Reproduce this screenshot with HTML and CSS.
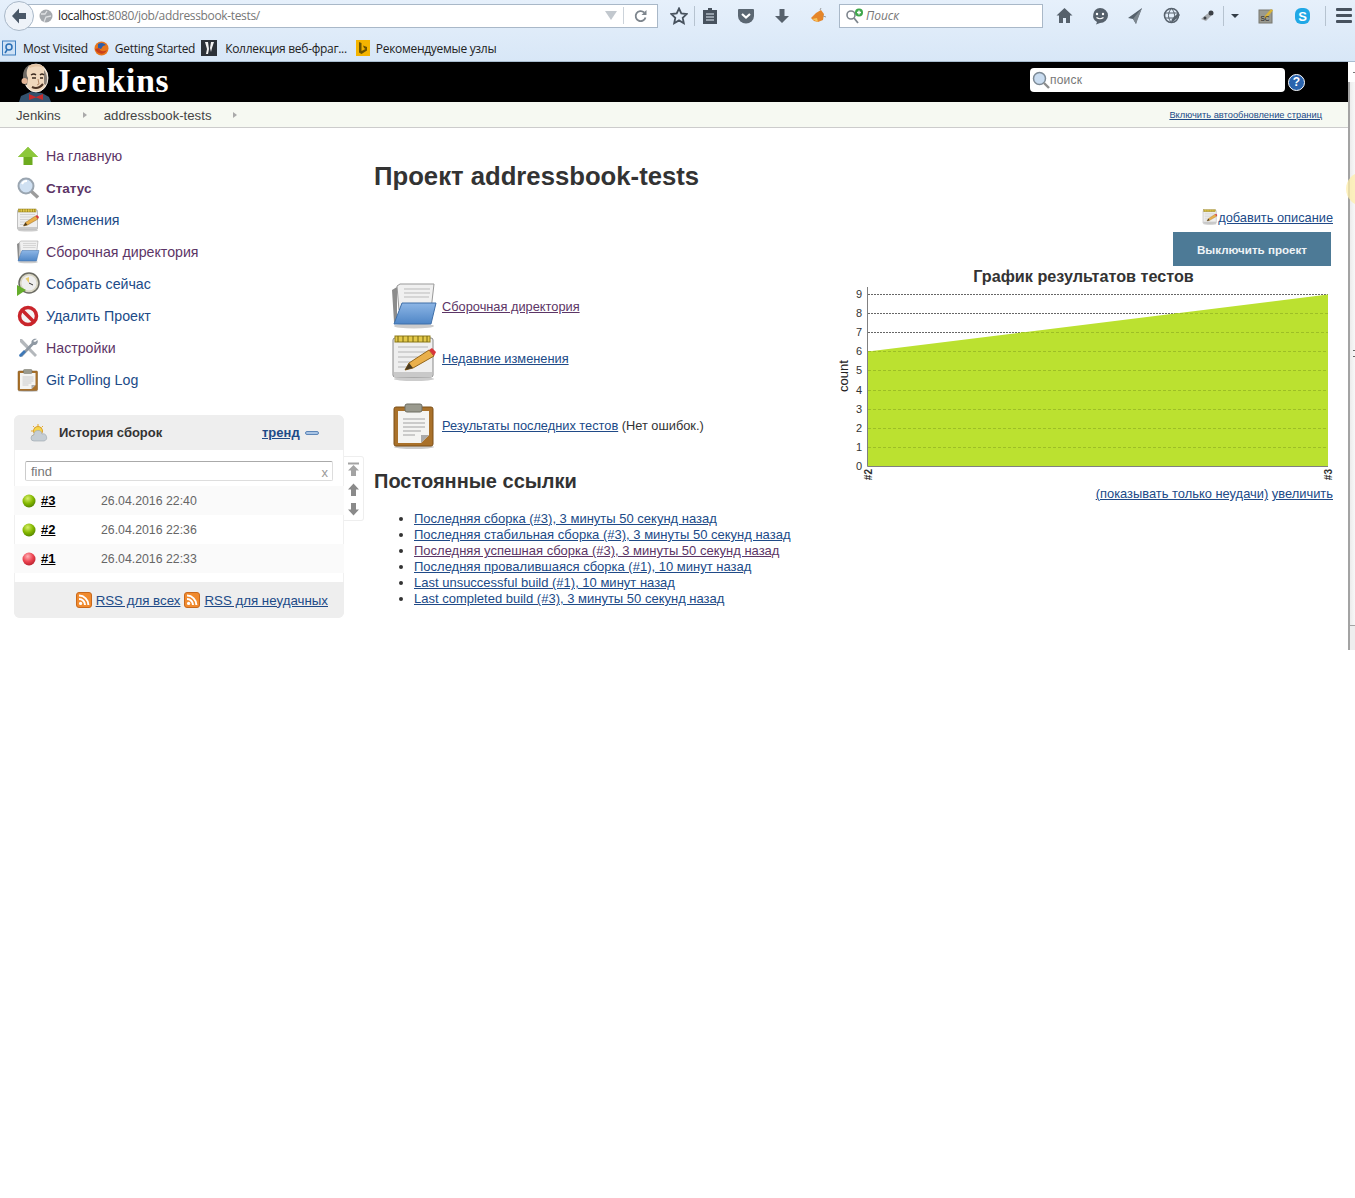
FILE: index.html
```html
<!DOCTYPE html>
<html lang="ru">
<head>
    <meta charset="UTF-8">
    <title>addressbook-tests [Jenkins]</title>
    <link rel="stylesheet" href="styles.css">
</head>
<body>
    <svg class="icon-defs" width="0" height="0" aria-hidden="true">
        <defs>
            <linearGradient id="folderBlue" x1="0" y1="0" x2="0" y2="1"><stop offset="0" stop-color="#8db6e6"/><stop offset="1" stop-color="#4f86c6"/></linearGradient>
            <radialGradient id="ballGreen" cx="0.4" cy="0.3" r="0.75"><stop offset="0" stop-color="#d6ee6a"/><stop offset="0.55" stop-color="#84b800"/><stop offset="1" stop-color="#4f7f00"/></radialGradient>
            <radialGradient id="ballRed" cx="0.4" cy="0.3" r="0.75"><stop offset="0" stop-color="#ffb0b5"/><stop offset="0.55" stop-color="#ec4350"/><stop offset="1" stop-color="#b3202c"/></radialGradient>
            <symbol id="i-folder" viewBox="0 0 48 48">
                <ellipse cx="24" cy="44" rx="20" ry="2.5" fill="#ccc"/>
                <path d="M2 8l5-3v36l-3-1z" fill="#8c8c8c"/>
                <path d="M7 4l3-2h34l-3 26H9z" fill="#f0f0f0" stroke="#999"/>
                <path d="M14 7h26M14 11h26M14 15h25" stroke="#bbb"/>
                <path d="M12 21h34l-5 21H4z" fill="url(#folderBlue)" stroke="#3f6fa8"/>
            </symbol>
            <symbol id="i-notepad" viewBox="0 0 48 48">
                <ellipse cx="24" cy="45" rx="20" ry="2" fill="#ccc"/>
                <rect x="3" y="4" width="40" height="39" rx="2" fill="#efefef" stroke="#888"/>
                <rect x="4" y="38" width="38" height="5" fill="#c9c9c9"/>
                <rect x="5" y="2" width="35" height="6" fill="#e3c94a" stroke="#8d7a1a"/>
                <path d="M8 2v6M13 2v6M18 2v6M23 2v6M28 2v6M33 2v6M37 2v6" stroke="#75650f"/>
                <path d="M8 13h30M8 18h28M8 23h20M8 28h14M8 33h12" stroke="#b5b5b5"/>
                <path d="M15 36l4-7 20-13 5 6-21 12z" fill="#eab04b" stroke="#94661a"/>
                <path d="M39 16l3-2 4 4-2 4z" fill="#d9363a"/>
                <path d="M15 36l4-7 4 5z" fill="#4a3a20"/>
            </symbol>
            <symbol id="i-clip" viewBox="0 0 48 48">
                <ellipse cx="24" cy="46" rx="20" ry="2" fill="#ccc"/>
                <rect x="4" y="6" width="39" height="39" rx="2" fill="#a9712a" stroke="#7c5018"/>
                <path d="M8 10h31v24l-8 8H8z" fill="#f4f4f2"/>
                <path d="M39 34l-8 8v-8z" fill="#aaa"/>
                <rect x="15" y="3" width="17" height="8" rx="2" fill="#9a9a8e" stroke="#6e6e62"/>
                <path d="M13 18h22M13 22h22M13 26h22M13 30h18M13 34h12" stroke="#bdbdbd" stroke-width="1.5"/>
            </symbol>
            <symbol id="i-rss" viewBox="0 0 16 16">
                <rect x="0.5" y="0.5" width="15" height="15" rx="2.5" fill="#f08a2e" stroke="#c9691c"/>
                <circle cx="4.6" cy="11.4" r="1.6" fill="#fff"/>
                <path d="M3 7a6 6 0 0 1 6 6M3 3.600A9.400 9.400 0 0 1 12.400 13" fill="none" stroke="#fff" stroke-width="2"/>
            </symbol>
        </defs>
    </svg>

    <div class="browser">
        <div class="nav-row">
            <div class="back-btn">
                <svg width="20" height="20" viewBox="0 0 20 20"><path d="M10 2.500L3 10l7 7.500V13h7V7h-7z" fill="#4a5868"/></svg>
            </div>
            <div class="url-bar">
                <svg class="globe" width="14" height="14" viewBox="0 0 14 14"><circle cx="7" cy="7" r="6.500" fill="#a5a9ae"/><path d="M2 5h4l2-3M5 13l2-5 5-1" fill="none" stroke="#dfe1e3" stroke-width="1.300"/></svg>
                <span class="url-host">localhost</span><span class="url-rest">:8080/job/addressbook-tests/</span>
                <span class="url-drop"></span>
                <span class="url-sep"></span>
                <svg class="reload" width="14" height="14" viewBox="0 0 14 14"><path d="M11.500 8.500a5 5 0 1 1-1.400-5" fill="none" stroke="#7d858d" stroke-width="1.800"/><path d="M12.500 1v5h-5z" fill="#7d858d"/></svg>
            </div>
            <div class="tool-group tool-left">
                <svg width="18" height="18" viewBox="0 0 18 18"><path d="M9 1.500l2.300 5 5.400.6-4 3.700 1.100 5.400L9 13.400l-4.800 2.800 1.100-5.400-4-3.700 5.400-.6z" fill="none" stroke="#47525e" stroke-width="1.800"/></svg>
                <span class="tool-sep sep-star"></span>
                <svg class="after-star" width="16" height="18" viewBox="0 0 16 18"><path d="M6 1h4v2h5v14H1V3h5z" fill="#47525e"/><path d="M4 7h8M4 10h8M4 13h8" stroke="#e3edf8" stroke-width="1.200"/></svg>
                <svg class="gap-p" width="18" height="16" viewBox="0 0 18 16"><path d="M2 1h14a1 1 0 0 1 1 1v6a8 7.500 0 0 1-16 0V2a1 1 0 0 1 1-1z" fill="#5b6772"/><path d="M5 6l4 3.500L13 6" fill="none" stroke="#fff" stroke-width="2.200"/></svg>
                <svg class="gap-p" width="16" height="16" viewBox="0 0 16 16"><path d="M5.500 1h5v7H15l-7 7-7-7h4.500z" fill="#56616c"/></svg>
                <svg class="gap-l" width="16" height="16" viewBox="0 0 16 16"><path d="M1 10l5-5 5-3 3 4-1 6-5 2-4-1z" fill="#e5862a"/><path d="M10 2l1-2M13 8l3 1" stroke="#9a9a9a"/><path d="M2 11l5-1 1 4z" fill="#f7c45a"/></svg>
            </div>
            <div class="search-bar">
                <svg width="20" height="16" viewBox="0 0 20 16"><circle cx="6" cy="7" r="4" fill="none" stroke="#7d858d" stroke-width="1.600"/><path d="M9 10l4 5" stroke="#7d858d" stroke-width="1.800"/><circle cx="14" cy="4.500" r="4" fill="#3ea64a"/><path d="M14 2.500v4M12 4.500h4" stroke="#fff" stroke-width="1.400"/></svg>
                <span>Поиск</span>
            </div>
            <div class="tool-group tool-right">
                <svg width="17" height="17" viewBox="0 0 17 17"><path d="M8.500 1L.5 8.500H3V16h4v-5h3v5h4V8.500h2.500z" fill="#56616c"/></svg>
                <svg class="gap-m" width="18" height="18" viewBox="0 0 18 18"><path d="M9 1a8 7.500 0 0 1 0 15l-4 1.500 1-2.500A7.500 7.500 0 0 1 9 1z" fill="#56616c"/><circle cx="6" cy="7" r="1.200" fill="#fff"/><circle cx="12" cy="7" r="1.200" fill="#fff"/><path d="M5.500 10.500q3.500 2.500 7 0" fill="none" stroke="#fff" stroke-width="1.200"/></svg>
                <svg class="gap-m" width="16" height="18" viewBox="0 0 16 18"><path d="M15 1L1 11l5 1 3 5 1-4z" fill="#56616c"/><path d="M15 1L6 12l3 5z" fill="#7d8790"/></svg>
                <svg class="gap-l" width="18" height="18" viewBox="0 0 18 18"><circle cx="8.500" cy="8.500" r="7" fill="none" stroke="#56616c" stroke-width="1.600"/><path d="M2 6h13M2 11h13M8.500 1.500c-4 4-4 10 0 14M8.500 1.500c4 4 4 10 0 14" fill="none" stroke="#56616c"/><path d="M9 12l6-6 2 2-6 6-3 1z" fill="#56616c"/></svg>
                <svg class="gap-fly" width="16" height="16" viewBox="0 0 16 16"><path d="M1 11l6-5 6-3-2 5-5 5z" fill="#a8acb0"/><circle cx="11" cy="5" r="2.500" fill="#3b4046"/><circle cx="5" cy="10" r="1.500" fill="#3b4046"/></svg>
                <span class="tool-sep sep-fly"></span>
                <span class="drop-arrow"></span>
                <svg class="gap-fly" width="16" height="17" viewBox="0 0 16 17"><rect x="1" y="3" width="13" height="13" fill="#9a9a90" stroke="#77776f"/><path d="M6 10l7-8 2 1.500-7 8z" fill="#d9b43a"/><text x="2.500" y="14" font-size="6.500" font-family="Liberation Sans, sans-serif" fill="#222">SC</text></svg>
                <svg class="gap-l" width="17" height="18" viewBox="0 0 17 18"><rect x="1" y="1" width="15" height="16" rx="6" fill="#20a8e6"/><text x="8.500" y="14" text-anchor="middle" font-size="13" font-weight="700" font-family="Liberation Sans, sans-serif" fill="#fff">S</text></svg>
                <span class="tool-sep sep-menu"></span>
                <span class="menu-btn"><i></i><i></i><i></i></span>
            </div>
        </div>
        <div class="bookmarks">
            <span class="bookmark">
                <svg width="15" height="16" viewBox="0 0 15 16"><rect x="0.500" y="1" width="13" height="14" fill="#cfe2f6" stroke="#3f7fc0"/><circle cx="7" cy="7" r="3" fill="none" stroke="#2a6fb5" stroke-width="1.500"/><path d="M5 10l-2 3" stroke="#2a6fb5" stroke-width="1.500"/></svg>
                Most Visited
            </span>
            <span class="bookmark">
                <svg width="15" height="15" viewBox="0 0 15 15"><circle cx="7.500" cy="7.500" r="7" fill="#e8761c"/><path d="M4 3a6 6 0 0 1 8 1L9 5 7 8 4 7z" fill="#2f5ea8"/><path d="M1 8c2 5 9 7 12 1-3 2-7 2-8-2z" fill="#c8401c"/></svg>
                <span>Getting Started</span>
            </span>
            <span class="bookmark">
                <svg width="16" height="16" viewBox="0 0 16 16"><rect width="16" height="16" fill="#2c3138"/><path d="M4 2h3l1 7-1 5H5l1-5zM10 2h3l-2 6-1 4-1-4z" fill="#f2f2f2"/></svg>
                <span class="bookmark-gap">Коллекция веб-фраг...</span>
            </span>
            <span class="bookmark bookmark-last">
                <svg width="14" height="16" viewBox="0 0 14 16"><rect width="14" height="16" fill="#f4b400"/><path d="M3 2l2.500 1v8l4-2-1.500-1-1-2.500 4 1.500v3.500L5.500 14 3 12.500z" fill="#6b5200"/></svg>
                <span>Рекомендуемые узлы</span>
            </span>
        </div>
    </div>

    <div class="viewport">
        <div class="page">
            <header class="jk-header">
                <div class="logo">
                    <svg width="36" height="40" viewBox="0 0 36 40">
                        <path d="M1 40l2-6 9-4 12 1 7 4 2 5z" fill="#34526e"/>
                        <ellipse cx="18" cy="16" rx="12" ry="14" fill="#f0d8bd" stroke="#fff" stroke-width="0.800"/>
                        <path d="M7 23C3 15 5 5 12 3c-4 4-4 10-2 13l-1 7z" fill="#6f6a64"/>
                        <path d="M10 4c5-3 13-3 17 2-5-2-11-2-15 0z" fill="#e2c2a2"/>
                        <path d="M26 8c3 4 4 9 2 15l-2-1z" fill="#8b8178"/>
                        <circle cx="6.500" cy="19" r="3" fill="#e3b596"/>
                        <path d="M13 13q3-2 5 0M22 13q2-2 4 0" fill="none" stroke="#3a2a20" stroke-width="1.300"/>
                        <path d="M14 16h4M22 16h3" stroke="#3a2a20" stroke-width="1.600"/>
                        <path d="M20 17l1 5-2 1" fill="none" stroke="#b98d6c"/>
                        <path d="M14 25q6 3 11-3" fill="none" stroke="#4b3325" stroke-width="2"/>
                        <path d="M11 32l7 3 7-3v6l-7-2.500L11 38z" fill="#c92a2a"/>
                    </svg>
                    <span class="logo-text">Jenkins</span>
                </div>
                <div class="jk-search">
                    <div class="jk-search-box">
                        <svg width="18" height="18" viewBox="0 0 18 18"><circle cx="7.500" cy="7.500" r="6" fill="#c9dcf0" stroke="#7d8a96" stroke-width="1.500"/><path d="M12 12l5 5" stroke="#8d8d8d" stroke-width="2.400"/></svg>
                        <span>поиск</span>
                    </div>
                    <span class="help-btn">?</span>
                </div>
            </header>
            <nav class="breadcrumbs">
                <a class="crumb">Jenkins</a>
                <span class="crumb-arrow"></span>
                <a class="crumb">addressbook-tests</a>
                <span class="crumb-arrow"></span>
                <a class="auto-refresh" href="#">Включить автообновление страниц</a>
            </nav>

            <div class="layout">
                <aside class="side-panel">
                    <ul class="tasks">
                        <li>
                            <svg width="24" height="24" viewBox="0 0 24 24"><path d="M12 3L2 13h5.500v8h9v-8H22z" fill="#6dab1f"/><path d="M12 3L2 13h20z" fill="#8cc83b"/></svg>
                            <a class="visited" href="#">На главную</a>
                        </li>
                        <li>
                            <svg width="24" height="24" viewBox="0 0 24 24"><circle cx="10" cy="10" r="7.500" fill="#cfe0f2" stroke="#9aa5b0" stroke-width="2"/><path d="M6 8a5 5 0 0 1 5-3" fill="none" stroke="#fff" stroke-width="2"/><path d="M15.500 15.500l6.500 6" stroke="#9c9c9c" stroke-width="3.500"/></svg>
                            <a class="visited current" href="#">Статус</a>
                        </li>
                        <li>
                            <svg width="24" height="24" viewBox="0 0 48 48"><use href="#i-notepad"/></svg>
                            <a href="#">Изменения</a>
                        </li>
                        <li>
                            <svg width="24" height="24" viewBox="0 0 48 48"><use href="#i-folder"/></svg>
                            <a class="visited" href="#">Сборочная директория</a>
                        </li>
                        <li>
                            <svg width="24" height="24" viewBox="0 0 24 24"><circle cx="13" cy="11" r="10" fill="#d9d6c4" stroke="#6a6a62" stroke-width="1.500"/><circle cx="13" cy="11" r="7.500" fill="#eee"/><path d="M13 11V5L9.500 6.500z" fill="#e9cb6a"/><path d="M13 11l4 2" stroke="#333"/><path d="M1 13l9 5-9 6z" fill="#65ad2b"/></svg>
                            <a href="#">Собрать сейчас</a>
                        </li>
                        <li>
                            <svg width="24" height="24" viewBox="0 0 24 24"><circle cx="12" cy="12" r="8.500" fill="#f4f4f4" stroke="#c9252b" stroke-width="3.500"/><path d="M6 6l12 12" stroke="#c9252b" stroke-width="3.500"/></svg>
                            <a href="#">Удалить Проект</a>
                        </li>
                        <li>
                            <svg width="24" height="24" viewBox="0 0 24 24"><path d="M4 3h2l15 16-2 2L4 6z" fill="#b4b8bc"/><path d="M21 3c-3-1-6 1-5.500 4L4 19l2 2L17.500 9c3 .5 5-2 4-5L19 6l-2-1z" fill="#8f99a3"/><path d="M3 19l5-5 2 2-5 5a2 2 0 0 1-2-2z" fill="#3f79b8"/></svg>
                            <a class="visited" href="#">Настройки</a>
                        </li>
                        <li>
                            <svg width="24" height="24" viewBox="0 0 48 48"><use href="#i-clip"/></svg>
                            <a href="#">Git Polling Log</a>
                        </li>
                    </ul>

                    <div class="history-wrap">
                        <section class="history">
                            <div class="history-head">
                                <svg width="18" height="18" viewBox="0 0 18 18"><circle cx="8" cy="7" r="4.500" fill="#f6d64c" stroke="#d99d2b"/><path d="M8 0v2M1 7h2M3 2l1.500 1.500M13 2l-1.500 1.500M2 12l1.500-1.500" stroke="#e5a92e"/><path d="M4 17a3 3 0 0 1 0-6 4 4 0 0 1 8-1 3.500 3.500 0 0 1 2 7z" fill="#c5cdd4" stroke="#9aa4ad" stroke-width="0.600"/></svg>
                                <span class="history-title">История сборок</span>
                                <a class="trend" href="#">тренд</a>
                                <span class="collapse-btn"></span>
                            </div>
                            <div class="find-row">
                                <div class="find-box"><span>find</span><span class="find-x">x</span></div>
                            </div>
                            <div class="build odd">
                                <svg width="14" height="14" viewBox="0 0 14 14"><circle cx="7" cy="7" r="6.500" fill="url(#ballGreen)"/></svg>
                                <a class="build-no" href="#">#3</a>
                                <span class="build-date">26.04.2016 22:40</span>
                            </div>
                            <div class="build">
                                <svg width="14" height="14" viewBox="0 0 14 14"><circle cx="7" cy="7" r="6.500" fill="url(#ballGreen)"/></svg>
                                <a class="build-no" href="#">#2</a>
                                <span class="build-date">26.04.2016 22:36</span>
                            </div>
                            <div class="build odd">
                                <svg width="14" height="14" viewBox="0 0 14 14"><circle cx="7" cy="7" r="6.500" fill="url(#ballRed)"/></svg>
                                <a class="build-no" href="#">#1</a>
                                <span class="build-date">26.04.2016 22:33</span>
                            </div>
                            <div class="history-foot">
                                <svg width="16" height="16"><use href="#i-rss"/></svg>
                                <a href="#">RSS для всех</a>
                                <svg width="16" height="16"><use href="#i-rss"/></svg>
                                <a href="#">RSS для неудачных</a>
                            </div>
                        </section>
                        <div class="pager">
                            <svg width="13" height="14" viewBox="0 0 13 14"><path d="M1 .5h11v2H1zM6.500 3L12 8.500H9V14H4V8.500H1z" fill="#a3a3a3"/></svg>
                            <svg width="13" height="13" viewBox="0 0 13 13"><path d="M6.500 .5L12 6.500H9V13H4V6.500H1z" fill="#8a8a8a"/></svg>
                            <svg width="13" height="13" viewBox="0 0 13 13"><path d="M6.500 12.500L12 6.500H9V0H4v6.500H1z" fill="#8a8a8a"/></svg>
                        </div>
                    </div>
                </aside>

                <main class="main-panel">
                    <h1 class="job-title">Проект addressbook-tests</h1>
                    <div class="desc-row">
                        <svg width="16" height="16" viewBox="0 0 48 48"><use href="#i-notepad"/></svg><a href="#">добавить описание</a>
                    </div>
                    <div class="disable-row"><button class="disable-btn">Выключить проект</button></div>

                    <div class="job-body">
                        <div class="job-left">
                            <div class="main-links">
                                <div class="main-link link-a">
                                    <svg width="48" height="48" viewBox="0 0 48 48"><use href="#i-folder"/></svg>
                                    <a class="visited" href="#">Сборочная директория</a>
                                </div>
                                <div class="main-link link-b">
                                    <svg width="48" height="48" viewBox="0 0 48 48"><use href="#i-notepad"/></svg>
                                    <a href="#">Недавние изменения</a>
                                </div>
                                <div class="main-link link-c">
                                    <svg width="48" height="48" viewBox="0 0 48 48"><use href="#i-clip"/></svg>
                                    <span><a href="#">Результаты последних тестов</a> (Нет ошибок.)</span>
                                </div>
                            </div>
                            <h2 class="perma-title">Постоянные ссылки</h2>
                            <ul class="perma-links">
                                <li><a href="#">Последняя сборка (#3), 3 минуты 50 секунд назад</a></li>
                                <li><a href="#">Последняя стабильная сборка (#3), 3 минуты 50 секунд назад</a></li>
                                <li><a class="visited" href="#">Последняя успешная сборка (#3), 3 минуты 50 секунд назад</a></li>
                                <li><a href="#">Последняя провалившаяся сборка (#1), 10 минут назад</a></li>
                                <li><a href="#">Last unsuccessful build (#1), 10 минут назад</a></li>
                                <li><a href="#">Last completed build (#3), 3 минуты 50 секунд назад</a></li>
                            </ul>
                        </div>

                        <div class="trend-box">
                            <div class="trend-title">График результатов тестов</div>
                            <svg class="trend-chart" width="500" height="200" viewBox="-6 0 500 200">
                                <path class="grid-dark" d="M29 7.500H489M29 26.500H489M29 45.500H489"/>
                                <path d="M29 64.500L489 7.500V179H29z" fill="#bbe130"/>
                                <path class="grid-light" d="M182 45.500H489M336 26.500H489M29 64.500H489M29 83.500H489M29 103.500H489M29 122.500H489M29 141.500H489M29 160.500H489"/>
                                <path d="M28.500 0V179.500H489" fill="none" stroke="#808080"/>
                                <g class="y-labels">
                                    <text x="23" y="11">9</text><text x="23" y="30">8</text><text x="23" y="49">7</text>
                                    <text x="23" y="68">6</text><text x="23" y="87">5</text><text x="23" y="107">4</text>
                                    <text x="23" y="126">3</text><text x="23" y="145">2</text><text x="23" y="164">1</text>
                                    <text x="23" y="183">0</text>
                                </g>
                                <text class="y-title" transform="translate(9 89) rotate(-90)">count</text>
                                <text class="x-label" transform="translate(33 182) rotate(-90)">#2</text>
                                <text class="x-label" transform="translate(493 182) rotate(-90)">#3</text>
                            </svg>
                            <div class="trend-links">
                                <a href="#">(показывать только неудачи)</a> <a href="#">увеличить</a>
                            </div>
                        </div>
                    </div>
                </main>
            </div>
        </div>
        <div class="scrollbar">
            <span class="scroll-mark"></span>
            <div class="scroll-track">
                <span class="scroll-glow"></span>
                <span class="scroll-grip"></span>
            </div>
            <div class="scroll-foot"></div>
        </div>
    </div>
</body>
</html>
```

FILE: styles.css
```css
html, body {
    margin: 0;
    padding: 0;
    background: #fff;
}
body {
    font-family: "Liberation Sans", Arial, sans-serif;
    font-size: 12px;
    color: #333;
    overflow: hidden;
}
a {
    color: #204a87;
    text-decoration: underline;
}
a.visited {
    color: #5c3566;
}
ul {
    margin: 0;
    padding: 0;
}
.icon-defs {
    position: absolute;
}

/* browser chrome */
.browser {
    height: 62px;
    box-sizing: border-box;
    background: linear-gradient(#e6f0fb, #d8e7f7);
    border-bottom: 1px solid #a9bccf;
}
.nav-row {
    height: 31px;
    display: flex;
    align-items: center;
}
.back-btn {
    width: 28px;
    height: 28px;
    margin-left: 4px;
    border: 1px solid #a9b8c8;
    border-radius: 50%;
    background: #eef3f9;
    display: flex;
    align-items: center;
    justify-content: center;
    z-index: 1;
}
.url-bar {
    width: 630px;
    height: 24px;
    margin-left: -6px;
    padding-left: 10px;
    box-sizing: border-box;
    background: #fff;
    border: 1px solid #a9b8c8;
    display: flex;
    align-items: center;
    font-size: 12px;
    font-family: "Open Sans", sans-serif;
    letter-spacing: -0.35px;
}
.globe {
    margin-right: 5px;
}
.url-host {
    color: #222;
}
.url-rest {
    color: #777;
}
.url-drop {
    margin-left: auto;
    width: 0;
    height: 0;
    border-left: 6px solid transparent;
    border-right: 6px solid transparent;
    border-top: 9px solid #c2c8ce;
}
.url-sep {
    width: 1px;
    height: 17px;
    background: #ccd3da;
    margin: 0 10px 0 6px;
}
.reload {
    margin-right: 9px;
}
.tool-group {
    display: flex;
    align-items: center;
}
.tool-left {
    margin-left: 12px;
}
.tool-right {
    margin-left: 13px;
}
.tool-sep {
    width: 1px;
    height: 20px;
    background: #b6c3d0;
}
.sep-star { margin-left: 6px; }
.after-star { margin-left: 7px; }
.sep-fly { margin-left: 7px; }
.sep-menu { margin-left: 14px; }
.gap-p { margin-left: 19px; }
.gap-m { margin-left: 18px; }
.gap-l { margin-left: 20px; }
.gap-fly { margin-left: 19px; }
.search-bar {
    width: 204px;
    height: 24px;
    margin-left: 13px;
    padding-left: 5px;
    box-sizing: border-box;
    background: #fff;
    border: 1px solid #a9b8c8;
    display: flex;
    align-items: center;
    gap: 1px;
    font-family: "Open Sans", sans-serif;
    font-style: italic;
    font-size: 12px;
    color: #777;
}
.drop-arrow {
    width: 0;
    height: 0;
    margin-left: 7px;
    border-left: 4px solid transparent;
    border-right: 4px solid transparent;
    border-top: 4px solid #333d47;
}
.menu-btn {
    display: flex;
    flex-direction: column;
    gap: 3px;
    margin-left: 10px;
}
.menu-btn i {
    display: block;
    width: 16px;
    height: 3px;
    border-radius: 1px;
    background: #47525e;
}
.bookmarks {
    height: 30px;
    display: flex;
    align-items: center;
    padding-left: 2px;
    gap: 6px;
    font-family: "Open Sans", sans-serif;
    font-size: 12px;
    letter-spacing: -0.3px;
    color: #222;
}
.bookmark {
    display: flex;
    align-items: center;
    gap: 6px;
    padding-top: 4px;
}
.bookmark-gap {
    margin-left: 2px;
}
.bookmark-last {
    margin-left: 3px;
}

/* page next to the window's scrollbar */
.viewport {
    display: flex;
}
.page {
    flex: 1;
    min-width: 0;
}

/* jenkins header */
.jk-header {
    height: 40px;
    background: #000;
    display: flex;
    align-items: center;
    justify-content: space-between;
    padding: 0 43px 0 18px;
}
.logo {
    display: flex;
    align-items: flex-end;
    height: 40px;
    gap: 0;
}
.logo-text {
    font-family: "Liberation Serif", serif;
    font-weight: 700;
    font-size: 33.500px;
    line-height: 38px;
    padding-bottom: 2px;
    color: #fff;
    letter-spacing: 0.8px;
}
.jk-search {
    display: flex;
    align-items: center;
    gap: 3px;
}
.jk-search-box {
    width: 255px;
    height: 24px;
    margin-top: -4px;
    box-sizing: border-box;
    background: #fff;
    border-radius: 4px;
    display: flex;
    align-items: center;
    padding-left: 2px;
    color: #777;
    font-size: 12px;
    letter-spacing: 0.2px;
}
.help-btn {
    width: 15px;
    height: 15px;
    border-radius: 50%;
    border: 1px solid #fff;
    background: #2a63ad;
    color: #fff;
    font-size: 12px;
    font-weight: 700;
    text-align: center;
    line-height: 15px;
}
.breadcrumbs {
    height: 26px;
    box-sizing: border-box;
    background: #f6f9f2;
    border-bottom: 1px solid #ccc;
    display: flex;
    align-items: center;
    padding: 1px 26px 0 16px;
    font-size: 13.200px;
}
.crumb {
    color: #444;
    text-decoration: none;
}
.crumb-arrow {
    width: 0;
    height: 0;
    margin: 0 17px 0 22px;
    border-top: 3.500px solid transparent;
    border-bottom: 3.500px solid transparent;
    border-left: 4px solid #aaa;
}
.auto-refresh {
    margin-left: auto;
    font-size: 9.300px;
}

/* side panel */
.layout {
    display: flex;
}
.side-panel {
    width: 344px;
    margin-left: 14px;
    flex-shrink: 0;
    font-size: 14.200px;
}
.tasks {
    list-style: none;
    padding-top: 12px;
}
.tasks li {
    height: 32px;
    display: flex;
    align-items: center;
    gap: 6px;
    margin-left: 2px;
}
.tasks a {
    text-decoration: none;
}
.tasks a.current {
    font-weight: 700;
    font-size: 13.500px;
}
.history-wrap {
    position: relative;
    width: 330px;
    margin-top: 19px;
}
.history {
    background: #fff;
    border-radius: 6px;
    overflow: hidden;
    box-shadow: 0 0 0 1px #f0f0f0 inset;
}
.history-head {
    height: 35px;
    background: #eee;
    display: flex;
    align-items: center;
    padding-left: 16px;
    font-size: 13px;
    font-weight: 700;
}
.history-title {
    margin-left: 11px;
    width: 203px;
}
.trend {
    color: #204a87;
}
.collapse-btn {
    width: 12px;
    height: 2px;
    margin-left: 5px;
    border: 1px solid #5d86b8;
    border-radius: 2px;
    background: #a9c4e4;
}
.find-row {
    padding: 11px 11px 5px;
}
.find-box {
    height: 20px;
    box-sizing: border-box;
    border: 1px solid #ddd;
    border-top-color: #aaa;
    border-left-color: #ccc;
    border-radius: 2px;
    display: flex;
    align-items: center;
    justify-content: space-between;
    padding: 0 4px 0 5px;
    font-size: 13px;
    color: #777;
}
.find-x {
    font-size: 13px;
    color: #999;
    padding-top: 3px;
}
.build {
    height: 29px;
    box-sizing: border-box;
    display: flex;
    align-items: center;
    font-size: 12.300px;
}
.build.odd {
    background: #fafafa;
}
.build svg {
    margin-left: 8px;
}
.build-no {
    width: 60px;
    margin-left: 5px;
    font-size: 13px;
    font-weight: 700;
    color: #000;
}
.build-date {
    color: #666;
}
.history-foot {
    margin-top: 9px;
    height: 36px;
    background: #eee;
    display: flex;
    align-items: center;
    justify-content: flex-end;
    gap: 4px;
    padding-right: 16px;
    font-size: 13.300px;
}
.pager {
    position: absolute;
    left: 330px;
    top: 41px;
    width: 20px;
    height: 65px;
    box-sizing: border-box;
    border: 1px solid #eee;
    border-left: none;
    border-radius: 0 3px 3px 0;
    display: flex;
    flex-direction: column;
    align-items: center;
    gap: 7px;
    padding-top: 5px;
}

/* main panel */
.main-panel {
    flex: 1;
    margin-left: 16px;
    margin-right: 15px;
    min-width: 0;
}
.job-title {
    font-size: 25.700px;
    line-height: 30px;
    margin: 33px 0 0;
    color: #333;
}
.desc-row {
    display: flex;
    justify-content: flex-end;
    align-items: center;
    margin-top: 16px;
    height: 20px;
    font-size: 12.800px;
}
.disable-row {
    display: flex;
    justify-content: flex-end;
    margin-top: 5px;
    padding-right: 2px;
}
.disable-btn {
    width: 158px;
    height: 34px;
    border: none;
    background: #4d7a96;
    color: #eef3f6;
    font-family: inherit;
    font-size: 11.600px;
    font-weight: 700;
}
.job-body {
    display: flex;
    justify-content: space-between;
}
.main-links {
    padding-top: 16px;
}
.main-link {
    display: flex;
    align-items: center;
    gap: 4px;
    margin-left: 16px;
    font-size: 12.800px;
}
.link-b {
    margin-top: 4px;
}
.link-c {
    margin-top: 19px;
}
.perma-title {
    font-size: 20px;
    line-height: 24px;
    margin: 20px 0 0;
    color: #333;
}
.perma-links {
    list-style: disc;
    margin: 18px 0 0 40px;
    font-size: 13px;
    line-height: 16px;
}
.trend-box {
    width: 494px;
}
.trend-title {
    font-size: 16.200px;
    font-weight: 700;
    line-height: 21px;
    text-align: center;
    padding-right: 5px;
}
.trend-chart {
    display: block;
    margin-left: -6px;
}
.grid-dark {
    fill: none;
    stroke: #666;
    stroke-dasharray: 2 1;
}
.grid-light {
    fill: none;
    stroke: #9dbf26;
    stroke-dasharray: 3 2;
}
.y-labels text {
    font-size: 11px;
    text-anchor: end;
    fill: #333;
}
.y-title {
    font-size: 13px;
    fill: #222;
    text-anchor: middle;
}
.x-label {
    font-size: 10px;
    font-weight: 700;
    fill: #333;
    text-anchor: end;
}
.trend-links {
    text-align: right;
    font-size: 12.900px;
    margin-top: -1px;
}

/* window scrollbar */
.scrollbar {
    width: 7px;
    height: 588px;
    position: relative;
}
.scroll-mark {
    position: absolute;
    left: 5px;
    top: 10px;
    width: 2px;
    height: 1px;
    background: #777;
}
.scroll-track {
    position: absolute;
    left: 0;
    top: 20px;
    width: 7px;
    height: 543px;
    box-sizing: border-box;
    border-left: 2px solid #a3a3a3;
    background: linear-gradient(90deg, #ececec, #f8f8f8);
}
.scroll-glow {
    position: absolute;
    left: -4px;
    top: 90px;
    width: 34px;
    height: 34px;
    border-radius: 50%;
    background: rgba(253, 238, 170, 0.75);
}
.scroll-grip {
    position: absolute;
    left: 3px;
    top: 268px;
    width: 2px;
    height: 5px;
    border-top: 1px solid #666;
    border-bottom: 1px solid #666;
}
.scroll-foot {
    position: absolute;
    left: 0;
    top: 563px;
    width: 7px;
    height: 25px;
    box-sizing: border-box;
    border-left: 2px solid #a3a3a3;
    border-top: 1px solid #a3a3a3;
    background: #eee;
}
```
